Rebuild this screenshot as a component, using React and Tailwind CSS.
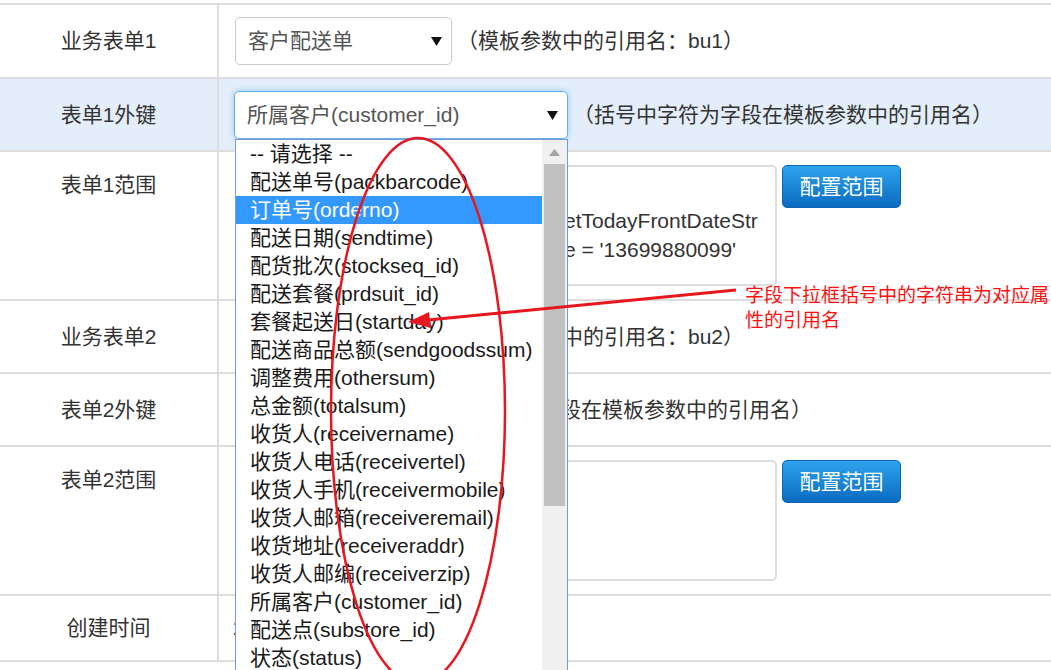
import React from "react";

const FONT = "font-['Liberation_Sans','Noto_Sans_CJK_SC',sans-serif]";

const items = [
  "-- 请选择 --",
  "配送单号(packbarcode)",
  "订单号(orderno)",
  "配送日期(sendtime)",
  "配货批次(stockseq_id)",
  "配送套餐(prdsuit_id)",
  "套餐起送日(startday)",
  "配送商品总额(sendgoodssum)",
  "调整费用(othersum)",
  "总金额(totalsum)",
  "收货人(receivername)",
  "收货人电话(receivertel)",
  "收货人手机(receivermobile)",
  "收货人邮箱(receiveremail)",
  "收货地址(receiveraddr)",
  "收货人邮编(receiverzip)",
  "所属客户(customer_id)",
  "配送点(substore_id)",
  "状态(status)",
  "创建时间(createtime)",
];

function Arrow() {
  return (
    <svg width="11" height="9" viewBox="0 0 11 9" className="shrink-0">
      <path d="M0 0 L11 0 L5.5 9 Z" fill="#111" />
    </svg>
  );
}

function Select({ text, w, focus }) {
  return (
    <div
      className={`${w} h-[48px] shrink-0 rounded-[5px] bg-white flex items-center justify-between pl-[12px] pr-[9px] text-[21px] leading-[28px] text-[#555] ${
        focus
          ? "border border-[#66afe9] shadow-[0_0_6px_rgba(102,175,233,0.6)]"
          : "border border-[#cccccc]"
      }`}
    >
      <span className="whitespace-nowrap overflow-hidden">{text}</span>
      <Arrow />
    </div>
  );
}

function Note({ children }) {
  return (
    <span className="ml-[5px] whitespace-nowrap text-[21px] leading-[28px] text-[#333]">
      {children}
    </span>
  );
}

function Label({ children, top }) {
  return (
    <div
      className={`w-[219px] shrink-0 border-r-2 border-[#dddddd] flex justify-center text-[21px] leading-[28px] text-[#333] ${
        top ? "items-start pt-[19px]" : "items-center"
      }`}
    >
      {children}
    </div>
  );
}

function Button() {
  return (
    <div className="w-[119px] h-[43px] shrink-0 rounded-[5px] border border-[#0b65b3] bg-linear-to-b from-[#2ea3ee] to-[#0a6bc0] flex items-center justify-center text-white text-[21px] leading-[28px]">
      配置范围
    </div>
  );
}

function Area({ lines }) {
  return (
    <div className="w-[542px] h-[121px] shrink-0 rounded-[5px] border-2 border-[#dddddd] bg-white pl-[12px] pt-[10px] text-[21px] leading-[29px] text-[#333] overflow-hidden">
      {lines.map((l, i) => (
        <div key={i} className="flex whitespace-nowrap h-[29px]">
          <span className="w-[315px] shrink-0 overflow-hidden">{l[0]}</span>
          <span>{l[1]}</span>
        </div>
      ))}
    </div>
  );
}

export default function App() {
  return (
    <div className={`relative w-[1051px] h-[670px] overflow-hidden bg-white ${FONT}`}>
      <div className="h-[3px]" />
      <div className="border-t-2 border-[#dddddd]">
        {/* row 1 */}
        <div className="flex h-[74px] border-b-2 border-[#dddddd]">
          <Label>业务表单1</Label>
          <div className="flex items-center pl-[16px]">
            <Select text="客户配送单" w="w-[217px]" />
            <Note>（模板参数中的引用名：bu1）</Note>
          </div>
        </div>
        {/* row 2 */}
        <div className="flex h-[73px] border-b-2 border-[#dddddd] bg-[#e3eefa]">
          <Label>表单1外键</Label>
          <div className="flex items-center pl-[15px] pt-[1px]">
            <Select text="所属客户(customer_id)" w="w-[334px]" focus />
            <Note>（括号中字符为字段在模板参数中的引用名）</Note>
          </div>
        </div>
        {/* row 3 */}
        <div className="flex h-[149px] border-b-2 border-[#dddddd]">
          <Label top>表单1范围</Label>
          <div className="flex items-start gap-[5px] pl-[16px] pt-[13px]">
            <Area
              lines={[
                ["sendtime >= ", ""],
                ["and a.sendtime <= DateUtil.g", "etTodayFrontDateStr"],
                ["and receivermobil", "e = '13699880099'"],
              ]}
            />
            <Button />
          </div>
        </div>
        {/* row 4 */}
        <div className="flex h-[73px] border-b-2 border-[#dddddd]">
          <Label>业务表单2</Label>
          <div className="flex items-center pl-[16px]">
            <Select text="客户订单" w="w-[217px]" />
            <Note>（模板参数中的引用名：bu2）</Note>
          </div>
        </div>
        {/* row 5 */}
        <div className="flex h-[73px] border-b-2 border-[#dddddd]">
          <Label>表单2外键</Label>
          <div className="flex items-center pl-[16px]">
            <Select text="订单号" w="w-[152px]" />
            <Note>（括号中字符为字段在模板参数中的引用名）</Note>
          </div>
        </div>
        {/* row 6 */}
        <div className="flex h-[149px] border-b-2 border-[#dddddd]">
          <Label top>表单2范围</Label>
          <div className="flex items-start gap-[5px] pl-[16px] pt-[13px]">
            <Area lines={[]} />
            <Button />
          </div>
        </div>
        {/* row 7 */}
        <div className="flex h-[66px] border-b-2 border-[#dddddd]">
          <Label>创建时间</Label>
          <div className="flex items-center pl-[14px] text-[21px] leading-[28px] text-[#333]">
            2018-04-17 10:25:33
          </div>
        </div>
      </div>

      {/* open dropdown list */}
      <div className="absolute left-[235px] top-[139px] w-[333px] h-[560px] bg-white border border-[#7a9ad6] flex">
        <div className="flex-1 flex flex-col">
          {items.map((t, i) => (
            <div
              key={i}
              className={`h-[28px] shrink-0 pl-[14px] text-[21px] leading-[28px] whitespace-nowrap ${
                i === 2 ? "bg-[#3399ff] text-white" : "text-[#1a1a1a]"
              }`}
            >
              {t}
            </div>
          ))}
        </div>
        <div className="w-[25px] shrink-0 bg-[#f0f0f0] flex flex-col items-center">
          <div className="h-[24px] flex items-center justify-center">
            <svg width="11" height="7" viewBox="0 0 11 7">
              <path d="M0 7 L5.5 0 L11 7 Z" fill="#a3a3a3" />
            </svg>
          </div>
          <div className="w-[21px] h-[342px] bg-[#c1c1c1]" />
        </div>
      </div>

      {/* annotation */}
      <div className="absolute left-[745px] top-[283px] w-[310px] text-[19px] leading-[25px] text-[#ff1010]">
        字段下拉框括号中的字符串为对应属性的引用名
      </div>
      <svg
        className="absolute inset-0 pointer-events-none"
        width="1051"
        height="670"
        viewBox="0 0 1051 670"
      >
        <ellipse cx="418" cy="411" rx="87" ry="273" fill="none" stroke="#e8161e" strokeWidth="2.5" />
        <line x1="736" y1="290" x2="428" y2="320" stroke="#e8161e" strokeWidth="3" />
        <path d="M408 322 L431 328 L429 312 Z" fill="#e8161e" />
      </svg>
    </div>
  );
}
